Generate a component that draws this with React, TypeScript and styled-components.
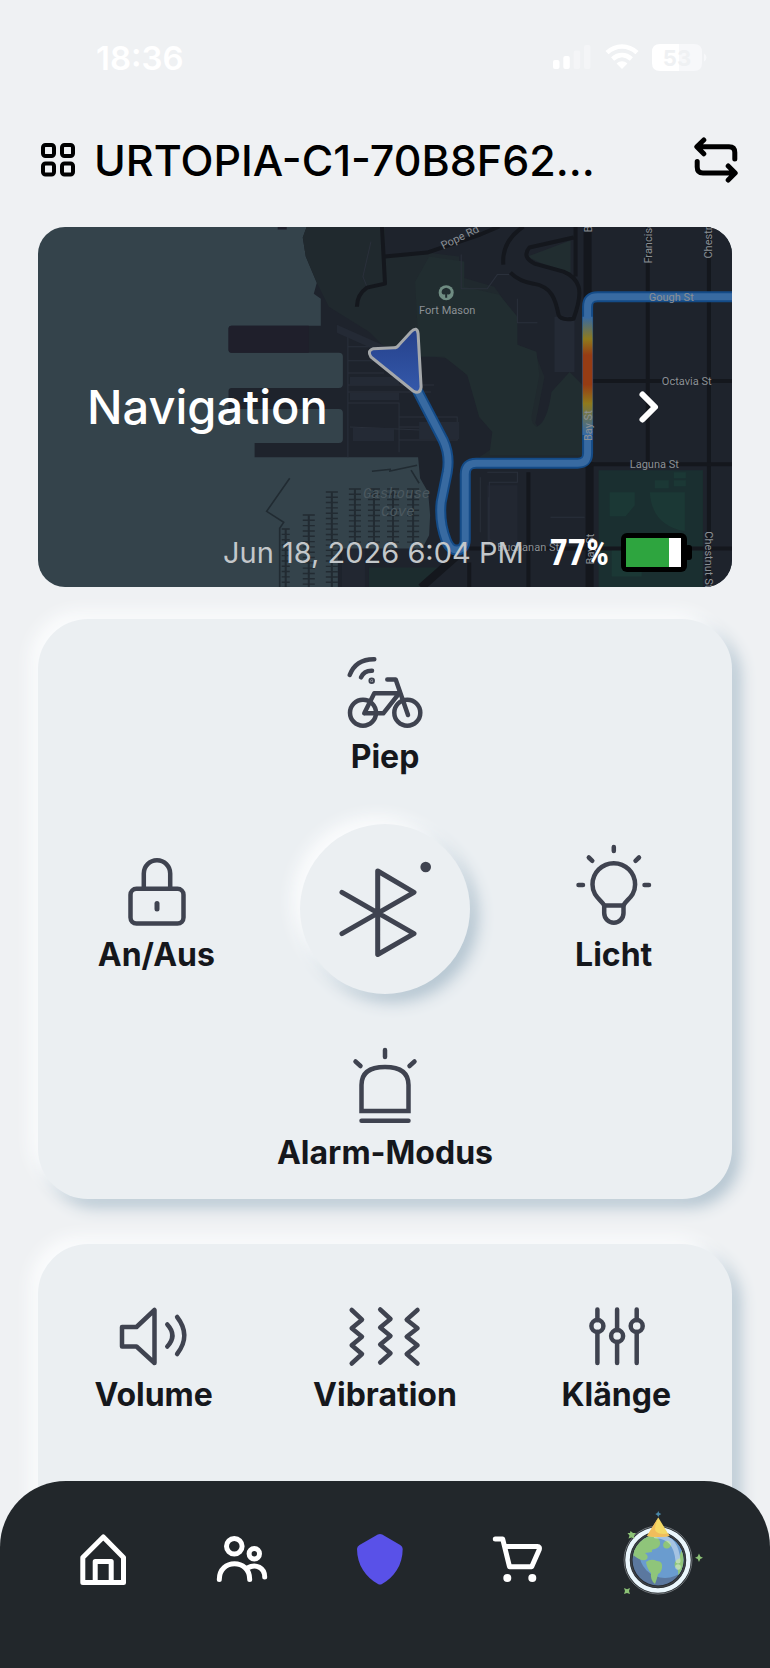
import React, { ReactElement, ReactNode } from 'react';
import styled, { createGlobalStyle } from 'styled-components';

interface TileProps {
  label: string;
  children: ReactNode;
}

const Tile = ({ label, children }: TileProps): ReactElement => {
  return (
    <TileButton type='button'>
      <TileIcon viewBox='0 0 92 92' aria-hidden='true'>
        {children}
      </TileIcon>
      <TileLabel>{label}</TileLabel>
    </TileButton>
  );
};

const StatusIcons = (): ReactElement => {
  return (
    <StatusIconsSvg viewBox='0 0 154 30' aria-hidden='true'>
      <rect x='0' y='17' width='6.5' height='9' rx='2' fill='#fff' />
      <rect x='10.3' y='13' width='6.5' height='13' rx='2' fill='#fff' />
      <rect x='20.7' y='7.5' width='6.5' height='18.5' rx='2' fill='#f4f5f7' />
      <rect x='31' y='2' width='6.5' height='24' rx='2' fill='#f4f5f7' />
      <g fill='none' stroke='#fff' strokeWidth='4.6'>
        <path d='M54 9.6C63 1.4 75 1.4 84 9.6' />
        <path d='M59.6 16C65.4 10.8 72.6 10.8 78.4 16' />
      </g>
      <path d='M63.6 20.4C67 17.6 71 17.6 74.4 20.4L69 26Z' fill='#fff' />
      <path d='M107 1H126V28H107Q99 28 99 20V9Q99 1 107 1Z' fill='#fff' />
      <path d='M126 1H141Q149 1 149 9V20Q149 28 141 28H126Z' fill='#f7f8fa' />
      <path d='M151 10.5Q153.5 12 153.5 14.5T151 18.5Z' fill='#f7f8fa' />
      <BatteryNumber x='124' y='22.5' textAnchor='middle'>
        53
      </BatteryNumber>
    </StatusIconsSvg>
  );
};

const Docks = (): ReactElement => {
  const docks = [
    [247, 302, 360],
    [270, 288, 360],
    [293, 265, 360],
    [316, 262, 316],
    [335, 262, 316],
    [354, 262, 316],
    [374, 262, 318],
  ];

  return (
    <g stroke='#222b32'>
      {docks.map(([x, from, to]) => (
        <g key={x}>
          <path d={`M${x} ${from}V${to}`} strokeWidth='2' />
          <path
            d={`M${x} ${from - 1}V${to}`}
            strokeWidth={x === 247 ? 8 : 12}
            strokeDasharray='1.4 3.9'
          />
        </g>
      ))}
    </g>
  );
};

const NavigationMap = (): ReactElement => {
  return (
    <MapSvg
      viewBox='0 0 692 360'
      preserveAspectRatio='xMidYMid slice'
      aria-hidden='true'
    >
      <defs>
        <linearGradient
          id='traffic'
          gradientUnits='userSpaceOnUse'
          x1='0'
          y1='80'
          x2='0'
          y2='214'
        >
          <stop offset='0.08' stopColor='#386aa1' />
          <stop offset='0.24' stopColor='#8f7a1c' />
          <stop offset='0.36' stopColor='#963c14' />
          <stop offset='0.58' stopColor='#963c14' />
          <stop offset='0.72' stopColor='#8f7a1c' />
          <stop offset='0.94' stopColor='#386aa1' />
        </linearGradient>
        <linearGradient id='arrow' x1='0' y1='0' x2='0' y2='1'>
          <stop offset='0' stopColor='#25408a' />
          <stop offset='1' stopColor='#3459ab' />
        </linearGradient>
      </defs>

      <rect width='692' height='360' fill='#34434b' />

      {/* land */}
      <path
        d='M268 0L264 11L267 30L278 56L275 67L282 72V99H193Q190 99 190 102V123Q190 126 193 126H300Q304 126 304 130V157Q304 161 300 161H193Q190 161 190 164V182H300Q304 182 304 186V212Q304 216 300 216H216V230H379L381 251L389 265L391 288L390 308L383 321H299V360H692V0Z'
        fill='#1e232c'
      />
      <path d='M239 0H248V3H239Z' fill='#1e212c' />
      <path d='M190 102V123Q190 126 193 126H270V99H193Q190 99 190 102Z' fill='#1f1f2b' />

      {/* parks */}
      <path
        d='M268 0L264 11L267 30L278 56L290 80L330 105L345 120L380 128L410 132L430 150L440 190L455 205L452 222L440 230H548V165L528 158L512 200L500 203L496 196L505 150L495 125L478 118L476 90L455 60L420 50V30L388 26L346 30V0Z'
        fill='#20292e'
      />
      <path
        d='M376 55L390 30L425 35V60L460 68L478 90V118L497 125L500 148L493 185Q490 195 497 200Q508 195 512 165L530 145L545 160V228H450L453 205L440 190L428 148L405 130L380 130Z'
        fill='#212d30'
      />
      <path d='M488 30L531 14V46L500 36Z' fill='#212d30' />
      <path d='M559 243H663V360H559Z' fill='#1a2f30' />
      <path
        d='M570 265H595V278L586 289H570ZM610 265H645V304Q612 298 610 265ZM615 253H629V261H615ZM634 245H646V251H634ZM634 253H646V259H634ZM572 320H602V349H572Z'
        fill='#1b3835'
      />
      <path d='M330 340H402L385 360H330Z' fill='#1c2c2e' />

      {/* blocks */}
      <g fill='none' stroke='#2a303b' strokeWidth='1'>
        <path d='M332 15L324 50L328 60M422 28V62H448L458 48H470M478 72V96H498M518 95H529V142H518ZM309 105V230M309 120H345M309 134H350M309 146H345M309 158H395M309 165H392M309 176H360V225M360 190H418V213H360M360 200H412' />
        <path d='M448 245H478V255H450V312L478 325M441 250V305M449 270V320M511 290H545M311 200L405 204' />
      </g>
      <g fill='#242a35'>
        <path d='M298 98L370 130L365 136L298 106Z' />
        <path d='M311 150H360V158H311ZM311 166H360V173H311ZM314 201H355V214H314ZM515 90H535V145H515ZM380 195H420V212H380Z' />
        <path d='M303 322H326V360H303ZM478 258H448V322H478Z' opacity='0.6' />
      </g>

      {/* streets */}
      <g fill='none' stroke='#14171d' strokeLinejoin='round'>
        <path d='M548 0V80M550 235V360' strokeWidth='8' />
        <path d='M608 0V236M669 0V360M489 245V360M430 335V360' strokeWidth='4' />
        <path d='M552 154H692M545 237H692M430 321H692' strokeWidth='4' />
        <path d='M382 360L418 328' strokeWidth='8' />
        <path
          d='M343 0L346 57L328 61Q318 68 318 80M346 30L388 26L441 8L460 0'
          strokeWidth='4'
        />
        <path
          d='M484 0Q462 15 464 38M471 46Q480 55 494 57C512 60 516 72 519 88Q521 94 534 92Q542 70 539 60Q536 50 524 45L495 37Q482 30 490 21L534 11M536 0V50'
          strokeWidth='4'
        />
      </g>

      <g fill='none' stroke='#212b32' strokeWidth='1.6'>
        <path d='M251 251L228 284L245 295L241 301V360M333 244L352 242M350 244L378 238M372 243L380 256' />
      </g>
      <Docks />

      <CoveLabel x='324' y='271'>
        Gashouse
      </CoveLabel>
      <CoveLabel x='342' y='289'>
        Cove
      </CoveLabel>

      {/* route */}
      <g fill='none' strokeLinejoin='round' strokeLinecap='round'>
        <path
          d='M379 165L404 213Q411 228 408 245L402 275Q400 295 407 313C412 327 426 325 426 312V247Q426 236 437 236H538Q548 236 548 226V80Q548 70 558 70H700'
          stroke='#144b87'
          strokeWidth='11'
        />
        <path
          d='M379 165L404 213Q411 228 408 245L402 275Q400 295 407 313C412 327 426 325 426 312V247Q426 236 437 236H538Q548 236 548 226V80Q548 70 558 70H700'
          stroke='#386aa1'
          strokeWidth='7'
        />
      </g>
      <path d='M543 90H553V208H543Z' fill='url(#traffic)' />
      <path
        d='M334 122L355 121Q358 121 360 118L372 105Q378 99 379 107L382 160Q381 168 374 164L332 130Q328 124 334 122Z'
        fill='url(#arrow)'
        stroke='#a5a8ab'
        strokeWidth='3'
      />

      {/* labels */}
      <circle cx='407' cy='66' r='7.5' fill='#6f8c82' />
      <path
        d='M407 61Q402 62 402.5 66Q403 68.5 406 67.5V71H408V67.5Q411 68.5 411.5 66Q412 62 407 61Z'
        fill='#212d30'
      />
      <MapLabel x='380' y='87'>
        Fort Mason
      </MapLabel>
      <MapLabel transform='translate(404 23) rotate(-26)'>Pope Rd</MapLabel>
      <MapLabel x='609' y='74'>
        Gough St
      </MapLabel>
      <MapLabel x='622' y='158'>
        Octavia St
      </MapLabel>
      <MapLabel x='590' y='241'>
        Laguna St
      </MapLabel>
      <MapLabel x='458' y='324'>
        Buchanan St
      </MapLabel>
      <MapLabel transform='translate(552 214) rotate(-90)'>Bay St</MapLabel>
      <MapLabel transform='translate(554 337) rotate(-90)'>Bay St</MapLabel>
      <MapLabel transform='translate(552 6) rotate(-90)'>Bay St</MapLabel>
      <MapLabel transform='translate(612 37) rotate(-90)'>Francisco St</MapLabel>
      <MapLabel transform='translate(672 32) rotate(-90)'>Chestnut St</MapLabel>
      <MapLabel transform='translate(665 304) rotate(90)'>Chestnut St</MapLabel>
    </MapSvg>
  );
};

const SparklingGlobe = (): ReactElement => {
  return (
    <GlobeSvg viewBox='0 0 96 96' aria-hidden='true'>
      <defs>
        <clipPath id='globe'>
          <circle cx='49' cy='49' r='25.5' />
        </clipPath>
      </defs>
      <circle cx='49' cy='49' r='34' fill='none' stroke='#6b7075' strokeWidth='1' />
      <circle cx='49' cy='49' r='30.5' fill='none' stroke='#eaf6fc' strokeWidth='4.5' />
      <circle cx='49' cy='49' r='27' fill='none' stroke='#3c4046' strokeWidth='1.5' />
      <g clipPath='url(#globe)'>
        <rect x='22' y='22' width='54' height='54' fill='#5b789f' />
        <circle cx='56' cy='41' r='26' fill='#6a9ccf' />
        <path
          d='M24 48Q24 28 42 23Q50 26 51 31Q52 36 46 38Q42 38 43 41L36 42Q40 45 38 48Q34 52 24 44Z'
          fill='#8fc57a'
        />
        <path
          d='M37 51Q42 47 48 50Q54 50 53 57Q52 62 49 63Q48 68 46 73Q41 69 42 62Q38 58 37 51Z'
          fill='#8fc57a'
        />
        <path d='M54 34Q55 29 60 30Q64 34 60 37Q55 39 54 34Z' fill='#8fc57a' />
        <path d='M74 38Q70 42 71 47Q64 50 66 56Q70 58 69 64L77 58V38Z' fill='#8fc57a' />
        <path
          d='M47 25Q67 25 69 50'
          fill='none'
          stroke='#fff'
          strokeOpacity='0.4'
          strokeWidth='5'
          strokeLinecap='round'
        />
        <circle cx='69' cy='56' r='2.8' fill='#fff' fillOpacity='0.4' />
      </g>
      <path d='M49.3 6.5L60.5 25Q49 27 38 25Z' fill='#f4d965' />
      <path d='M49.3 6.5L38 25Q49 27 60.5 25L59 22.5Q50 24 46.5 20Q45 16 49.3 6.5Z' fill='#f0bd5c' />
      <path d='M49.3 0L50.2 2L52.3 3L50.2 4.2L49.3 6L48.3 4.2L46.3 3L48.3 2Z' fill='#4b88a8' />
      <g fill='#8cc276'>
        <path d='M90 42.5L91.3 45.5L94 46.7L91.3 48L90 51L88.7 48L86 46.7L88.7 45.5Z' />
        <path d='M21.5 20L24 22L27 22L25 24.5L25.5 27.5L22.5 26.5L19.5 27.5L20.5 24.5L18.5 22L21 22Z' />
        <path d='M15 77L18 78.2L21 77L20 80L21 83L18 82L15 83L16 80Z' />
      </g>
    </GlobeSvg>
  );
};

const App = (): ReactElement => {
  return (
    <Page>
      <GlobalStyle />

      <StatusBar>
        <Clock>18:36</Clock>
        <StatusIcons />
      </StatusBar>

      <Header>
        <IconButton type='button' aria-label='Devices'>
          <GridSvg viewBox='0 0 36 36' aria-hidden='true'>
            <rect x='3' y='3' width='11' height='11' rx='2.5' />
            <rect x='22' y='3' width='11' height='11' rx='2.5' />
            <rect x='3' y='21.5' width='11' height='11' rx='2.5' />
            <rect x='22' y='21.5' width='11' height='11' rx='2.5' />
          </GridSvg>
        </IconButton>
        <DeviceName>URTOPIA-C1-70B8F62...</DeviceName>
        <IconButton type='button' aria-label='Switch device'>
          <SwapSvg viewBox='0 0 44 46' aria-hidden='true'>
            <path d='M9.8 3L2.8 9.8L9.8 16.8M3.5 9.8H35Q40.8 9.8 40.8 15.500V22' />
            <path d='M3.2 24.5V30Q3.2 36 9 36H40.5M34.2 29L41.2 36L34.2 43' />
          </SwapSvg>
        </IconButton>
      </Header>

      <Main>
        <NavigationCard href='#navigation'>
          <NavigationMap />
          <CardTitle>
            <span>Navigation</span>
            <ChevronSvg viewBox='0 0 22 34' aria-hidden='true'>
              <path d='M4.5 4.5L17 17L4.5 29.5' />
            </ChevronSvg>
          </CardTitle>
          <CardFooter>
            <Timestamp>Jun 18, 2026 6:04 PM</Timestamp>
            <Charge>77%</Charge>
            <BatterySvg viewBox='0 0 72 40' aria-hidden='true'>
              <rect x='0' y='0' width='66' height='39' rx='6' fill='#000' />
              <rect x='64' y='12' width='7' height='15' rx='3' fill='#000' />
              <rect x='5' y='5' width='55' height='29' fill='#fff' />
              <rect x='5' y='5' width='43' height='29' fill='#2ea53f' />
            </BatterySvg>
          </CardFooter>
        </NavigationCard>

        <ControlPanel>
          <TopCell>
            <Tile label='Piep'>
              <circle cx='24' cy='69.7' r='13' />
              <circle cx='68.3' cy='69.7' r='13' />
              <path d='M25.3 70.3H44.3L59.3 51.3M25.3 70.3L35.3 50.3H59.3' />
              <path d='M48.3 36.5H56.7L69 72' />
              <path d='M10.7 32Q17 16 35.3 16.3' />
              <path d='M22 34.3Q25 27.5 33 27.7' />
              <circle cx='32.7' cy='37.7' r='1' fill='#3f4350' />
            </Tile>
          </TopCell>
          <LeftCell>
            <Tile label='An/Aus'>
              <rect x='20.5' y='47.8' width='53' height='34.8' rx='6' />
              <path d='M33.8 47V32.4A13.2 13.2 0 0 1 60.2 32.4V47' />
              <path d='M47 62.5V68' strokeWidth='5' />
            </Tile>
          </LeftCell>
          <CenterCell>
            <BluetoothButton type='button' aria-label='Bluetooth'>
              <BluetoothSvg viewBox='0 0 170 170' aria-hidden='true'>
                <path d='M42 68.3L114 109.7L77.7 130.5V47L114 68.3L42 109.7' />
                <circle cx='125.7' cy='43' r='5.3' />
              </BluetoothSvg>
            </BluetoothButton>
          </CenterCell>
          <RightCell>
            <Tile label='Licht'>
              <path d='M36.2 64.5C34 59 24.5 56 24.5 43.5A21.3 21.3 0 0 1 67.1 43.5C67.1 56 57.5 59 55.5 64.5Z' />
              <path d='M36.2 64.5V72.1A9.6 9.6 0 0 0 55.5 72.1V64.5' />
              <path d='M45.8 6V10M10.500 43.9H15M76.5 43.9H81M20.8 16.5L24.3 19.8M71 16.5L67.5 19.8' />
            </Tile>
          </RightCell>
          <BottomCell>
            <Tile label='Alarm-Modus'>
              <path d='M22.5 72V46C22.5 33 32 28 46 28S69.5 33 69.5 46V72Z' strokeLinejoin='miter' />
              <path d='M22.5 81.8H69.5M46 11V18M16.5 22.5L21.5 27M75.5 22.5L70.5 27' />
            </Tile>
          </BottomCell>
        </ControlPanel>

        <SoundPanel>
          <Tile label='Volume'>
            <path d='M14 46H28.5L46.5 29V82L28.5 65.5H14Z' />
            <path d='M59.3 43.5Q69.5 54.5 59.3 65.5M69.1 36Q83.5 54.5 69.1 73' />
          </Tile>
          <Tile label='Vibration'>
            <path d='M12.7 29L23 38.7L12.7 47.3L23 55.7L12.7 64.3L23 73L12.7 82.5' />
            <path d='M41.2 28.5L51.5 38L41.2 46.5L51.5 54.9L41.2 63.5L51.5 72.3L41.2 81.5' />
            <path d='M78.5 29L67.7 38.7L78.5 47.3L67.7 55.7L78.5 64.3L67.7 73L78.5 82.5' />
          </Tile>
          <Tile label='Klänge'>
            <path d='M27.4 28.5V39M27.4 51V82M47.1 28.5V49M47.1 61V82M66.7 28.5V39M66.7 51V82' />
            <circle cx='27.4' cy='45' r='6' />
            <circle cx='47.1' cy='55' r='6' />
            <circle cx='66.7' cy='45' r='6' />
          </Tile>
        </SoundPanel>
      </Main>

      <TabBar>
        <Tab href='#home' aria-label='Home'>
          <TabSvg viewBox='0 0 56 56' aria-hidden='true'>
            <path d='M7.8 51.5V26.5L28.3 6L48.5 26.5V51.5ZM20.2 51.5V30.4H36.2V51.5' />
          </TabSvg>
        </Tab>
        <Tab href='#community' aria-label='Community'>
          <TabSvg viewBox='0 0 56 56' aria-hidden='true'>
            <circle cx='20.3' cy='15.3' r='7.8' />
            <circle cx='40.3' cy='22.7' r='5.2' />
            <path d='M5.3 48.5C5.3 27.5 35.7 27.5 35.7 48.5M33.5 37C42 32 50.7 37 50.7 46' />
          </TabSvg>
        </Tab>
        <Tab href='#ride' aria-label='Ride' aria-current='page'>
          <TabSvg viewBox='0 0 56 56' aria-hidden='true'>
            <path
              d='M25.8 3.6Q28 2.4 30.2 3.6L48.2 14Q50.7 15.4 50.7 18C50.7 34 42 46.5 30 53Q28 54 26 53C14 46.5 5 34 5 18Q5 15.4 7.5 14Z'
              fill='#5951e8'
              stroke='none'
            />
          </TabSvg>
        </Tab>
        <Tab href='#shop' aria-label='Shop'>
          <TabSvg viewBox='0 0 56 56' aria-hidden='true'>
            <path d='M5.3 8H12.7L19.5 35.7H41.7L49.3 18.5Q50 15.5 47.5 15.5H14.7' />
            <circle cx='17.3' cy='47' r='4' fill='#fff' stroke='none' />
            <circle cx='42.3' cy='47' r='4' fill='#fff' stroke='none' />
          </TabSvg>
        </Tab>
        <Tab href='#explore' aria-label='Explore'>
          <SparklingGlobe />
        </Tab>
      </TabBar>
    </Page>
  );
};

export default App;

const GlobalStyle = createGlobalStyle`
  * {
    box-sizing: border-box;
  }

  body {
    margin: 0;
    background: #eff1f3;
    font-family: Inter, 'Liberation Sans', sans-serif;
  }
`;

const Page = styled.div`
  display: flex;
  flex-direction: column;
  height: 100vh;
  overflow: hidden;
  background: #eff1f3;
`;

const StatusBar = styled.div`
  display: flex;
  flex: none;
  align-items: center;
  justify-content: space-between;
  height: 116px;
  padding: 0 63px 0 96px;
  color: #fff;
`;

const Clock = styled.span`
  font-size: 33px;
  font-weight: 600;
  line-height: 40px;
`;

const StatusIconsSvg = styled.svg`
  width: 154px;
  height: 30px;
`;

const BatteryNumber = styled.text`
  fill: #eff1f3;
  font-size: 22px;
  font-weight: 700;
`;

const Header = styled.header`
  display: flex;
  flex: none;
  align-items: center;
  gap: 18px;
  height: 88px;
  padding: 0 32px 0 40px;
`;

const IconButton = styled.button`
  display: flex;
  flex: none;
  padding: 0;
  border: 0;
  background: none;
  cursor: pointer;
`;

const GridSvg = styled.svg`
  width: 36px;
  height: 36px;
  fill: none;
  stroke: #000;
  stroke-width: 4;
`;

const SwapSvg = styled.svg`
  width: 44px;
  height: 46px;
  fill: none;
  stroke: #000;
  stroke-width: 5;
  stroke-linecap: round;
  stroke-linejoin: round;
`;

const DeviceName = styled.h1`
  flex: 1;
  margin: 0;
  color: #000;
  font-size: 43px;
  font-weight: 500;
  line-height: 52px;
  white-space: nowrap;
`;

const Main = styled.main`
  display: flex;
  flex: none;
  flex-direction: column;
  padding: 23px 38px 0;
`;

const NavigationCard = styled.a`
  position: relative;
  display: flex;
  flex-direction: column;
  justify-content: flex-end;
  height: 360px;
  overflow: hidden;
  border-radius: 27px;
  color: #fff;
  text-decoration: none;
`;

const MapSvg = styled.svg`
  position: absolute;
  inset: 0;
  width: 100%;
  height: 100%;
`;

const MapLabel = styled.text`
  fill: #8b9095;
  font-family: Roboto, 'Liberation Sans', sans-serif;
  font-size: 11px;
`;

const CoveLabel = styled.text`
  fill: #4b585f;
  font-family: 'Liberation Mono', monospace;
  font-size: 14px;
  font-style: italic;
`;

const CardTitle = styled.div`
  position: relative;
  display: flex;
  align-items: center;
  justify-content: space-between;
  padding: 0 72px 0 49px;
  font-size: 47px;
  font-weight: 500;
  line-height: 56px;
`;

const ChevronSvg = styled.svg`
  width: 22px;
  height: 34px;
  fill: none;
  stroke: #fff;
  stroke-width: 6;
  stroke-linecap: round;
  stroke-linejoin: round;
`;

const CardFooter = styled.div`
  position: relative;
  display: flex;
  align-items: center;
  justify-content: flex-end;
  height: 40px;
  margin: 98px 39px 14px 0;
  white-space: nowrap;
`;

const Timestamp = styled.time`
  margin-right: 26px;
  color: #c3c7ca;
  font-size: 29px;
  line-height: 40px;
`;

const Charge = styled.span`
  margin-right: 12px;
  font-family: 'Roboto Condensed', 'Open Sans Condensed', sans-serif;
  font-size: 36px;
  font-weight: 700;
  line-height: 40px;
`;

const BatterySvg = styled.svg`
  width: 72px;
  height: 40px;
`;

const Panel = styled.section`
  border-radius: 50px;
  background: #ebeff2;
  box-shadow:
    -8px -8px 16px #fbfcfd,
    8px 8px 16px #b3c4d0;
`;

const ControlPanel = styled(Panel)`
  display: grid;
  grid-template-columns: repeat(3, 1fr);
  grid-template-rows: repeat(3, 136px);
  grid-template-areas:
    '. top .'
    'left center right'
    '. bottom .';
  row-gap: 62px;
  margin-top: 32px;
  padding: 24px 4px;
`;

const Cell = styled.div`
  display: flex;
  align-items: center;
  justify-content: center;
`;

const TopCell = styled(Cell)`
  grid-area: top;
`;

const LeftCell = styled(Cell)`
  grid-area: left;
`;

const CenterCell = styled(Cell)`
  grid-area: center;
`;

const RightCell = styled(Cell)`
  grid-area: right;
`;

const BottomCell = styled(Cell)`
  grid-area: bottom;
`;

const SoundPanel = styled(Panel)`
  display: grid;
  grid-template-columns: repeat(3, 1fr);
  justify-items: center;
  margin-top: 45px;
  padding: 37px 0 320px;
`;

const TileButton = styled.button`
  display: flex;
  flex-direction: column;
  align-items: center;
  padding: 0;
  border: 0;
  background: none;
  color: #15171c;
  font-family: inherit;
  cursor: pointer;
`;

const TileIcon = styled.svg`
  width: 92px;
  height: 92px;
  fill: none;
  stroke: #3f4350;
  stroke-width: 4.5;
  stroke-linecap: round;
  stroke-linejoin: round;
`;

const TileLabel = styled.span`
  font-size: 32px;
  font-weight: 700;
  line-height: 44px;
  white-space: nowrap;
`;

const BluetoothButton = styled.button`
  display: flex;
  flex: none;
  padding: 0;
  border: 0;
  border-radius: 50%;
  background: #ebeff2;
  box-shadow:
    -8px -8px 16px #fbfcfd,
    8px 8px 16px #b3c4d0;
  cursor: pointer;
`;

const BluetoothSvg = styled.svg`
  width: 170px;
  height: 170px;
  fill: none;
  stroke: #3f4350;
  stroke-width: 5;
  stroke-linecap: round;
  stroke-linejoin: round;

  circle {
    fill: #3f4350;
    stroke: none;
  }
`;

const TabBar = styled.nav`
  position: fixed;
  right: 0;
  bottom: 0;
  left: 0;
  display: grid;
  grid-template-columns: repeat(5, 1fr);
  height: 187px;
  padding: 30px 44px 61px 34px;
  border-radius: 66px 66px 0 0;
  background: #22272b;
`;

const Tab = styled.a`
  display: flex;
  align-items: center;
  justify-content: center;
`;

const TabSvg = styled.svg`
  width: 56px;
  height: 56px;
  fill: none;
  stroke: #fff;
  stroke-width: 5;
  stroke-linecap: round;
  stroke-linejoin: round;
`;

const GlobeSvg = styled.svg`
  width: 96px;
  height: 96px;
`;
